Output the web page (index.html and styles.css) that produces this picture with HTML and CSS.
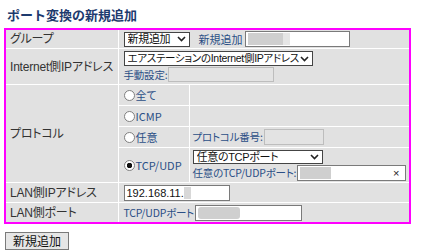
FILE: index.html
```html
<!DOCTYPE html>
<html lang="ja">
<head>
    <meta charset="UTF-8">
    <meta name="viewport" content="width=device-width, initial-scale=1.0">
    <title>ポート変換の新規追加</title>
    <link rel="stylesheet" href="styles.css">
</head>
<body>
    <h1 class="title">ポート変換の新規追加</h1>
    <form class="form">
        <table class="grid">
            <colgroup>
                <col class="col-label">
                <col class="col-radio">
                <col>
            </colgroup>
            <tr class="row-group">
                <th>グループ</th>
                <td colspan="2">
                    <div class="line">
                        <span class="pick pick-group">
                            <select class="sel"><option>新規追加</option></select>
                            <svg class="chev" viewBox="0 0 9 6"><path d="M1 1 L4.5 4.5 L8 1"/></svg>
                        </span>
                        <span class="note note-group">新規追加</span>
                        <span class="field field-group"><span class="blur blur-group"></span></span>
                    </div>
                </td>
            </tr>
            <tr class="row-wan">
                <th>Internet側IPアドレス</th>
                <td colspan="2">
                    <div class="stack">
                        <span class="pick pick-wan">
                            <select class="sel"><option>エアステーションのInternet側IPアドレス</option></select>
                            <svg class="chev" viewBox="0 0 9 6"><path d="M1 1 L4.5 4.5 L8 1"/></svg>
                        </span>
                        <div class="line">
                            <span class="note note-small">手動設定:</span>
                            <span class="field field-off field-manual"></span>
                        </div>
                    </div>
                </td>
            </tr>
            <tr class="row-proto row-all">
                <th rowspan="4">プロトコル</th>
                <td class="radio-cell"><label class="opt"><input type="radio" name="proto" class="radio">全て</label></td>
                <td class="sub"></td>
            </tr>
            <tr class="row-proto row-icmp">
                <td class="radio-cell"><label class="opt"><input type="radio" name="proto" class="radio">ICMP</label></td>
                <td class="sub"></td>
            </tr>
            <tr class="row-proto row-any">
                <td class="radio-cell"><label class="opt"><input type="radio" name="proto" class="radio">任意</label></td>
                <td class="sub">
                    <div class="line">
                        <span class="note note-small">プロトコル番号:</span>
                        <span class="field field-off field-num"></span>
                    </div>
                </td>
            </tr>
            <tr class="row-tcp">
                <td class="radio-cell"><label class="opt"><input type="radio" name="proto" class="radio" checked>TCP/UDP</label></td>
                <td class="sub">
                    <div class="stack">
                        <span class="pick pick-tcp">
                            <select class="sel"><option>任意のTCPポート</option></select>
                            <svg class="chev" viewBox="0 0 9 6"><path d="M1 1 L4.5 4.5 L8 1"/></svg>
                        </span>
                        <div class="line">
                            <span class="note note-small note-tcp">任意のTCP/UDPポート:</span>
                            <span class="field field-tcp">
                                <span class="blur blur-tcp"></span>
                                <span class="clear">×</span>
                            </span>
                        </div>
                    </div>
                </td>
            </tr>
            <tr class="row-lan">
                <th>LAN側IPアドレス</th>
                <td colspan="2">
                    <span class="field field-lan">192.168.11.<span class="blur blur-lan"></span></span>
                </td>
            </tr>
            <tr class="row-lanport">
                <th>LAN側ポート</th>
                <td colspan="2">
                    <div class="line">
                        <span class="note note-small">TCP/UDPポート</span>
                        <span class="field field-port"><span class="blur blur-port"></span></span>
                    </div>
                </td>
            </tr>
        </table>
        <button type="button" class="add-btn">新規追加</button>
    </form>
</body>
</html>
```

FILE: styles.css
```css
body {
    margin: 0;
    padding: 5px 4px 0;
    background: #fff;
    color: #333;
    font-family: "Liberation Sans", "Noto Sans CJK JP", sans-serif;
    font-feature-settings: "palt";
}

.title {
    margin: 0 0 3px 3px;
    font-family: "Noto Sans CJK JP", sans-serif;
    font-feature-settings: normal;
    font-size: 13px;
    line-height: 20px;
    font-weight: bold;
    color: #1d3a6e;
}

.form {
    margin: 0;
}

.grid {
    width: 407px;
    border-collapse: collapse;
    border: 2px solid #ff00ff;
    table-layout: fixed;
}

.col-label {
    width: 113px;
}

.col-radio {
    width: 71px;
}

.grid th,
.grid td {
    border: 1px solid #fff;
    background: #e1e1e1;
    padding: 0 5px;
    vertical-align: middle;
    text-align: left;
    font-family: "Noto Sans CJK JP", sans-serif;
    font-size: 11px;
    line-height: 14px;
    color: #2b4f86;
}

.grid th {
    padding: 0 0 0 4px;
    font-family: "Liberation Sans", "Noto Sans CJK JP", sans-serif;
    font-weight: normal;
    font-size: 12px;
    letter-spacing: -0.2px;
    white-space: nowrap;
    color: #333;
}

.grid .sub {
    padding-left: 3px;
    padding-right: 2px;
}

.row-group td, .row-group th { height: 18px; }
.row-wan td, .row-wan th { height: 35px; }
.row-all td { height: 20px; }
.row-icmp td { height: 20px; }
.row-any td { height: 20px; }
.row-tcp td { height: 34px; }
.row-lan td, .row-lan th { height: 19px; }
.row-lanport td, .row-lanport th { height: 19px; }

.line {
    display: flex;
    align-items: center;
}

.stack {
    display: flex;
    flex-direction: column;
    align-items: flex-start;
    gap: 1px;
}

.pick {
    position: relative;
    display: inline-flex;
}

.sel {
    appearance: none;
    -webkit-appearance: none;
    margin: 0;
    height: 15px;
    padding: 0 12px 0 3px;
    border: 1px solid #444;
    border-radius: 0;
    background: #fff;
    color: #111;
    font-family: "Liberation Sans", "Noto Sans CJK JP", sans-serif;
    font-feature-settings: "palt";
    font-size: 11px;
    letter-spacing: -0.3px;
    line-height: 13px;
}

.pick-group .sel { width: 66px; }
.pick-wan .sel { width: 189px; font-size: 10.5px; }
.pick-tcp .sel { width: 130px; height: 14px; line-height: 12px; }

.chev {
    position: absolute;
    right: 4px;
    top: 50%;
    width: 9px;
    height: 6px;
    margin-top: -3px;
    fill: none;
    stroke: #222;
    stroke-width: 1.6;
}

.note {
    flex: none;
    white-space: nowrap;
}

.note-group {
    margin: 0 2px 0 9px;
}

.note-small {
    margin-right: 1px;
    font-size: 10.5px;
    letter-spacing: -0.2px;
}

.note-tcp {
    width: 104px;
    margin-right: 0;
}

.field {
    display: inline-flex;
    align-items: center;
    flex: none;
    box-sizing: border-box;
    height: 16px;
    padding: 0 2px;
    border: 1px solid #7a7a7a;
    background: #fff;
    color: #111;
    font-family: "Liberation Sans", sans-serif;
    font-size: 11px;
}

.field-group { width: 105px; }

.field-off {
    border-color: #bdbdbd;
    background: #e3e3e3;
}

.field-manual {
    width: 106px;
    height: 15px;
}

.field-num { width: 60px; }

.field-tcp {
    width: 109px;
    position: relative;
}

.field-lan { width: 106px; }

.field-port { width: 107px; }

.blur {
    display: inline-block;
    height: 12px;
    background: #cfcfcf;
}

.blur-group {
    width: 35px;
    box-shadow: 7px 0 0 #e6e6e6;
}

.blur-tcp { width: 31px; }

.blur-lan {
    width: 7px;
    background: #d8d8d8;
}

.blur-port {
    width: 42px;
    border-radius: 3px;
}

.clear {
    position: absolute;
    right: 5px;
    top: 0;
    font-size: 11px;
    line-height: 14px;
    color: #222;
}

.radio-cell {
    padding-left: 8px;
}

.opt {
    display: flex;
    align-items: center;
    gap: 1px;
    white-space: nowrap;
}

.radio {
    appearance: none;
    -webkit-appearance: none;
    width: 11px;
    height: 11px;
    margin: 0;
    border: 1px solid #808080;
    border-radius: 50%;
    background: #fff;
}

.radio:checked {
    background: radial-gradient(circle, #111 0 2.5px, #fff 3px);
}

.add-btn {
    margin-top: 8px;
    margin-left: 1px;
    height: 18px;
    padding: 0 7px;
    border: 1px solid #7a7a7a;
    border-radius: 0;
    background: #e6e6e6;
    color: #111;
    font-family: "Noto Sans CJK JP", sans-serif;
    font-size: 12px;
    line-height: 16px;
}
```
